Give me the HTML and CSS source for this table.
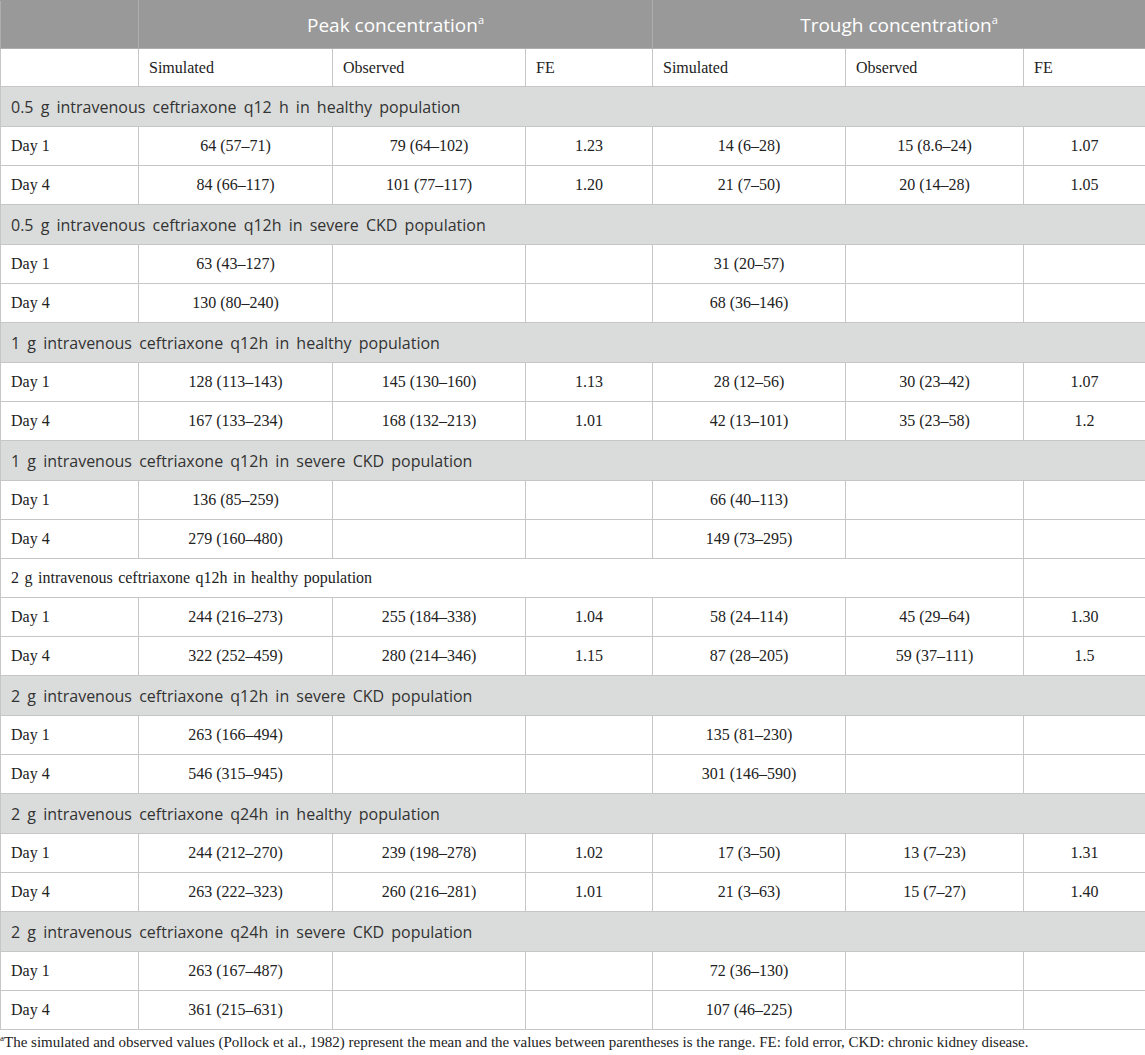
FILE: index.html
```html
<!DOCTYPE html>
<html lang="en">
<head>
<meta charset="utf-8">
<title>Ceftriaxone concentrations</title>
<link rel="stylesheet" href="styles.css">
</head>
<body>
<table class="tbl">
  <colgroup>
    <col class="c0"><col class="c1"><col class="c2"><col class="c3"><col class="c4"><col class="c5"><col class="c6">
  </colgroup>
  <thead>
    <tr class="hd">
      <th></th>
      <th colspan="3">Peak concentration<sup>a</sup></th>
      <th colspan="3">Trough concentration<sup>a</sup></th>
    </tr>
    <tr class="sub">
      <th></th>
      <th>Simulated</th><th>Observed</th><th>FE</th>
      <th>Simulated</th><th>Observed</th><th>FE</th>
    </tr>
  </thead>
  <tbody>
    <tr class="sec"><td colspan="7">0.5 g intravenous ceftriaxone q12 h in healthy population</td></tr>
    <tr class="row"><td>Day 1</td><td>64 (57–71)</td><td>79 (64–102)</td><td>1.23</td><td>14 (6–28)</td><td>15 (8.6–24)</td><td>1.07</td></tr>
    <tr class="row"><td>Day 4</td><td>84 (66–117)</td><td>101 (77–117)</td><td>1.20</td><td>21 (7–50)</td><td>20 (14–28)</td><td>1.05</td></tr>

    <tr class="sec"><td colspan="7">0.5 g intravenous ceftriaxone q12h in severe CKD population</td></tr>
    <tr class="row"><td>Day 1</td><td>63 (43–127)</td><td></td><td></td><td>31 (20–57)</td><td></td><td></td></tr>
    <tr class="row"><td>Day 4</td><td>130 (80–240)</td><td></td><td></td><td>68 (36–146)</td><td></td><td></td></tr>

    <tr class="sec"><td colspan="7">1 g intravenous ceftriaxone q12h in healthy population</td></tr>
    <tr class="row"><td>Day 1</td><td>128 (113–143)</td><td>145 (130–160)</td><td>1.13</td><td>28 (12–56)</td><td>30 (23–42)</td><td>1.07</td></tr>
    <tr class="row"><td>Day 4</td><td>167 (133–234)</td><td>168 (132–213)</td><td>1.01</td><td>42 (13–101)</td><td>35 (23–58)</td><td>1.2</td></tr>

    <tr class="sec"><td colspan="7">1 g intravenous ceftriaxone q12h in severe CKD population</td></tr>
    <tr class="row"><td>Day 1</td><td>136 (85–259)</td><td></td><td></td><td>66 (40–113)</td><td></td><td></td></tr>
    <tr class="row"><td>Day 4</td><td>279 (160–480)</td><td></td><td></td><td>149 (73–295)</td><td></td><td></td></tr>

    <tr class="row plain"><td colspan="6">2 g intravenous ceftriaxone q12h in healthy population</td><td></td></tr>
    <tr class="row"><td>Day 1</td><td>244 (216–273)</td><td>255 (184–338)</td><td>1.04</td><td>58 (24–114)</td><td>45 (29–64)</td><td>1.30</td></tr>
    <tr class="row"><td>Day 4</td><td>322 (252–459)</td><td>280 (214–346)</td><td>1.15</td><td>87 (28–205)</td><td>59 (37–111)</td><td>1.5</td></tr>

    <tr class="sec"><td colspan="7">2 g intravenous ceftriaxone q12h in severe CKD population</td></tr>
    <tr class="row"><td>Day 1</td><td>263 (166–494)</td><td></td><td></td><td>135 (81–230)</td><td></td><td></td></tr>
    <tr class="row"><td>Day 4</td><td>546 (315–945)</td><td></td><td></td><td>301 (146–590)</td><td></td><td></td></tr>

    <tr class="sec"><td colspan="7">2 g intravenous ceftriaxone q24h in healthy population</td></tr>
    <tr class="row"><td>Day 1</td><td>244 (212–270)</td><td>239 (198–278)</td><td>1.02</td><td>17 (3–50)</td><td>13 (7–23)</td><td>1.31</td></tr>
    <tr class="row"><td>Day 4</td><td>263 (222–323)</td><td>260 (216–281)</td><td>1.01</td><td>21 (3–63)</td><td>15 (7–27)</td><td>1.40</td></tr>

    <tr class="sec"><td colspan="7">2 g intravenous ceftriaxone q24h in severe CKD population</td></tr>
    <tr class="row"><td>Day 1</td><td>263 (167–487)</td><td></td><td></td><td>72 (36–130)</td><td></td><td></td></tr>
    <tr class="row"><td>Day 4</td><td>361 (215–631)</td><td></td><td></td><td>107 (46–225)</td><td></td><td></td></tr>
  </tbody>
</table>
<p class="note"><sup>a</sup>The simulated and observed values (Pollock et al., 1982) represent the mean and the values between parentheses is the range. FE: fold error, CKD: chronic kidney disease.</p>
</body>
</html>
```
FILE: styles.css
```css
html, body {
  margin: 0;
  padding: 0;
  background: #ffffff;
}
body {
  font-family: "Liberation Serif", "Times New Roman", serif;
  color: #222222;
}
.tbl {
  width: 1145px;
  border-collapse: collapse;
  table-layout: fixed;
}
.c0 { width: 138px; }
.c1 { width: 194px; }
.c2 { width: 193px; }
.c3 { width: 127px; }
.c4 { width: 193px; }
.c5 { width: 178px; }
.c6 { width: 122px; }

.tbl th, .tbl td {
  border: 1px solid #c6c6c6;
  padding: 0 10px;
  vertical-align: middle;
  white-space: nowrap;
  overflow: hidden;
}
.hd { height: 48px; }
.hd th {
  background: #999999;
  color: #ffffff;
  font-family: "Open Sans", "Noto Sans", sans-serif;
  font-weight: 400;
  font-size: 19px;
  text-align: center;
  border-color: #aeaeae;
  border-top-color: #999999;
}
.hd sup {
  font-size: 11px;
  vertical-align: 8px;
  line-height: 0;
}
.sub { height: 38px; }
.sub th {
  font-weight: 400;
  font-size: 16px;
  text-align: left;
  color: #222222;
}
.sec { height: 40px; }
.sec td {
  background: #dadcdb;
  font-family: "Open Sans", "Noto Sans", sans-serif;
  font-size: 16px;
  color: #333333;
  word-spacing: 3px;
}
.row { height: 39px; }
.row td {
  font-size: 16px;
  text-align: center;
}
.row td:first-child {
  text-align: left;
}
.plain td:first-child {
  word-spacing: 1.5px;
}
.note {
  margin: 4px 0 0 0;
  font-size: 15px;
  color: #222222;
}
.note sup {
  font-size: 9px;
  vertical-align: 6px;
  line-height: 0;
}
```
